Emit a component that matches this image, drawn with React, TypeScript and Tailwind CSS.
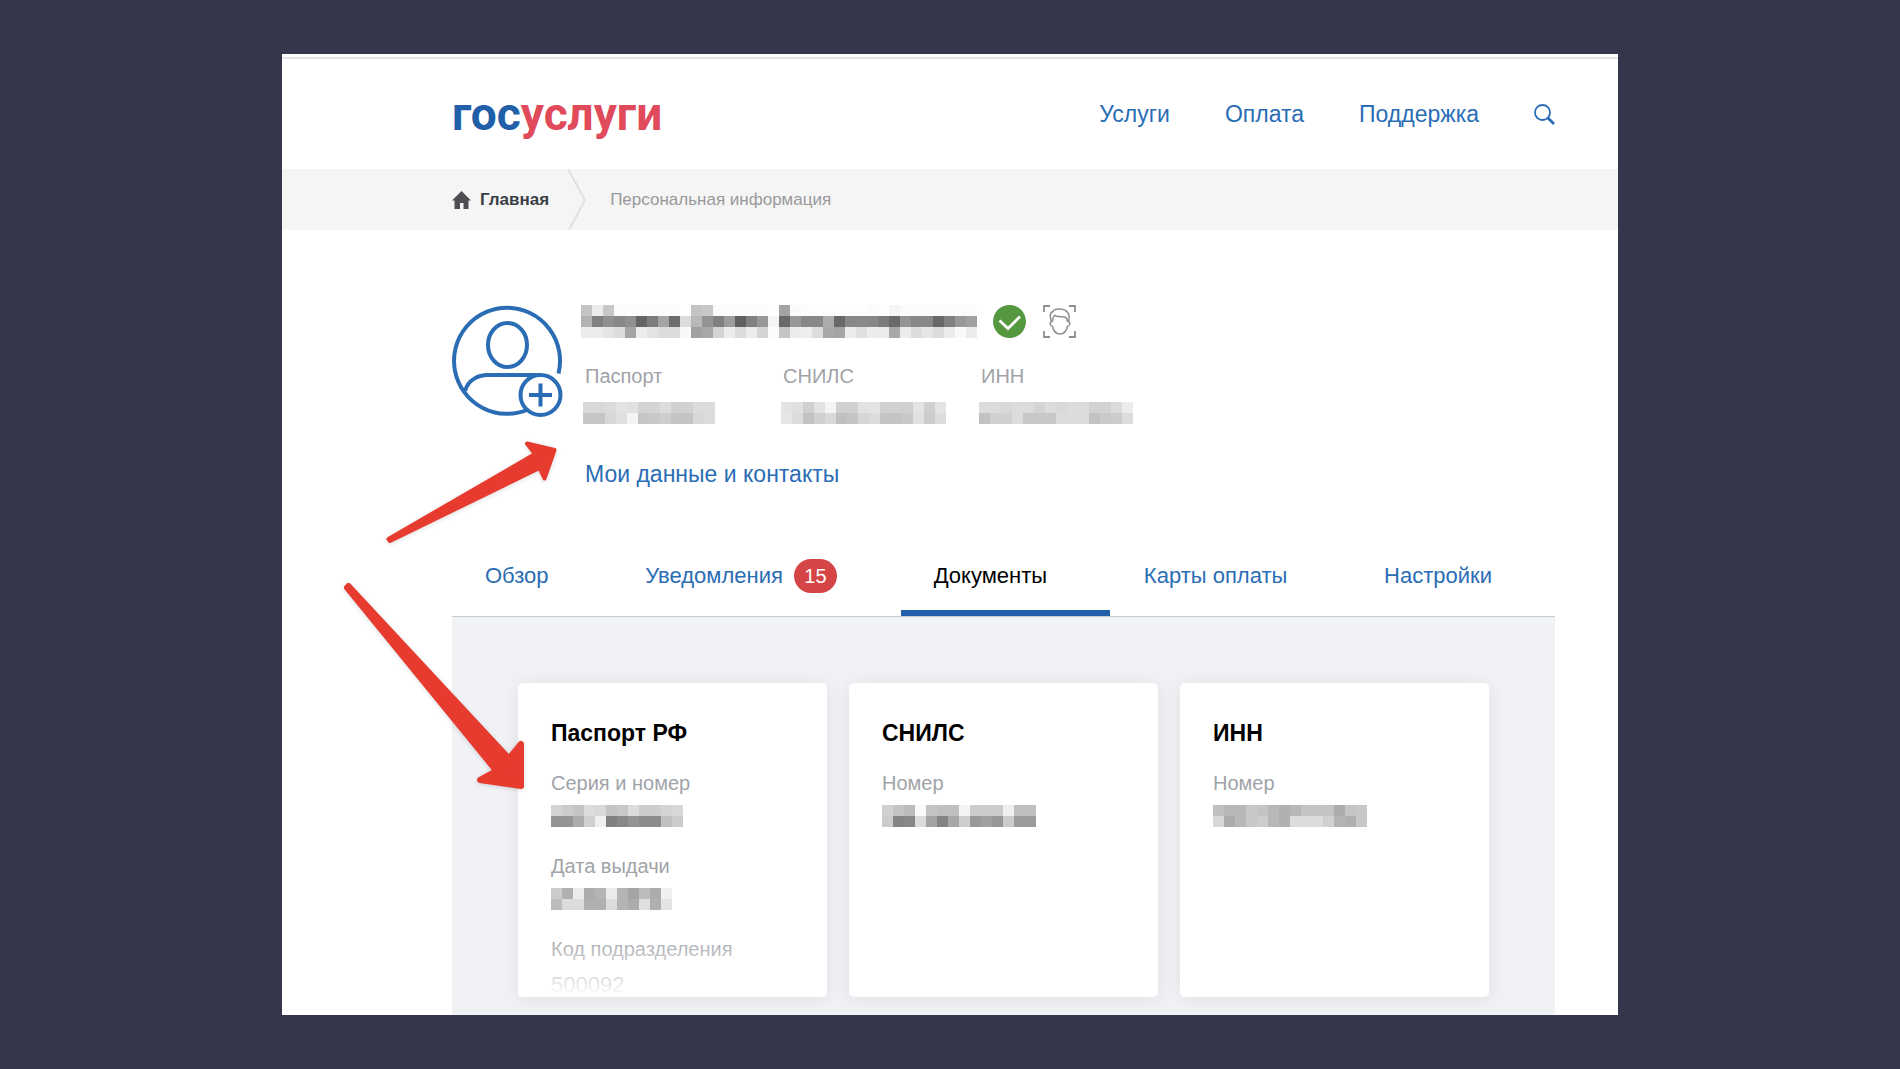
import React from "react";
import clsx from "clsx";

type MosaicProps = {
  label: string;
  rows: string[];
};

type Field = {
  name: string;
  rows?: string[];
  value?: string;
};

type Doc = {
  title: string;
  fields: Field[];
  faded?: boolean;
};

type Tab = {
  name: string;
  badge?: number;
  active?: boolean;
};

const CELL = 11;

const nav = ["Услуги", "Оплата", "Поддержка"];

const tabs: Tab[] = [
  { name: "Обзор" },
  { name: "Уведомления", badge: 15 },
  { name: "Документы", active: true },
  { name: "Карты оплаты" },
  { name: "Настройки" },
];

// each pair of hex digits is the gray level of one cell
const fullName = [
  "c4ecc8fbfbfbfbfbfbffc4c8fbfbfbfbfbfea4fafdfdfdfdfdfdfbfdf5fbfbfbfbfbfbfb",
  "b280908890647ca46cdcb894809c608098f468988888ac688888887c6a948888688098a0",
  "ecece4dca4ece4dcdcf8a0a8d4ecdcecd4fcc4eceedca8a4ece0ececa8ecdce6dcecfaec",
];

const ids: Field[] = [
  { name: "Паспорт", rows: ["d8d8dce4e0d4d4dcd0d2dcdc", "c6c6d8e0f4c6c8cec4c4d8dc"] },
  { name: "СНИЛС", rows: ["e4e0d0e2f4d0d0e2e4d0d2d0e4d0e4", "e6dcc2d0d8c0c4d6dcc4c4c8e0ccdc"] },
  { name: "ИНН", rows: ["dcdcd8dcdcd4dcd8dcdcd2d2dcec", "c2d0d0dcc8c8c8dcdcdcc2caccdc"] },
];

const docs: Doc[] = [
  {
    title: "Паспорт РФ",
    faded: true,
    fields: [
      { name: "Серия и номер", rows: ["d4ccc4dcd8c4c8dcccccd4d8", "9494acd0f08088948c8cc0cc"] },
      { name: "Дата выдачи", rows: ["ccb0ecacb4ecb4a4bcacf0", "bcdcdcb0b0dcb4ace0b0e4"] },
      { name: "Код подразделения", value: "500092" },
    ],
  },
  {
    title: "СНИЛС",
    fields: [{ name: "Номер", rows: ["d0c4bcfac4c0c0f4ccccccf0c0c0", "cc8488dca484a8ce98a098cc9c9c"] }],
  },
  {
    title: "ИНН",
    fields: [{ name: "Номер", rows: ["c0b8b8c8c4b8b0b8c4c4c4acc4c8", "d8acb8c8ccb8b0dcdcdcd0b4b0c8"] }],
  },
];

const Mosaic: React.FC<MosaicProps> = ({ label, rows }) => {
  const width = (rows[0].length / 2) * CELL;
  const height = rows.length * CELL;

  return (
    <svg role="img" aria-label={label} width={width} height={height} shapeRendering="crispEdges" className="block">
      {rows.map((row, y) =>
        (row.match(/../g) ?? []).map((g, x) => (
          <rect key={`${x}-${y}`} x={x * CELL} y={y * CELL} width={CELL} height={CELL} fill={`#${g}${g}${g}`} />
        ))
      )}
    </svg>
  );
};

const Avatar = () => (
  <svg width="111" height="113" viewBox="0 0 111 113" fill="none" stroke="#2a6db5" strokeWidth="4" className="shrink-0">
    <path d="M106.500 68.500A53 53 0 1 0 76 104.500" />
    <ellipse cx="55.500" cy="40" rx="19.500" ry="22" />
    <path d="M13 86C16 75 26 70 36 70H88" />
    <circle cx="88.500" cy="90" r="20" />
    <path d="M88.500 78.500V101.500M77 90H100" />
  </svg>
);

const Verified = () => (
  <svg width="33" height="33" viewBox="0 0 33 33" fill="none">
    <circle cx="16.500" cy="16.500" r="16.500" fill="#56983f" />
    <path d="M6.500 15.500L15 23.500L27 11.500" stroke="#fff" strokeWidth="2.800" />
  </svg>
);

const FaceScan = () => (
  <svg width="33" height="33" viewBox="0 0 33 33" fill="none" stroke="#8f8f8f" strokeWidth="1.500">
    <path d="M1 7V1H7M26 1H32V7M32 26V32H26M7 32H1V26" strokeWidth="1.800" />
    <path d="M8.500 17C7 12 6 8 10 6.500C11 3 22 3 25 8C27 11 26 14 25.500 17" />
    <path d="M9 17C7 16.500 6.500 19 8 20.500L9.500 21.500C10.500 26 13.500 29 17 29C20.500 29 23.500 26 24.500 21.500L26 20.500C27.500 19 27 16.500 25 17" />
    <path d="M9.500 17C9.500 14 9.500 12 11.500 10.500C15 12.500 19 11.500 22 12C24 13 24.500 15 24.500 17" />
  </svg>
);

const Search = () => (
  <svg width="21" height="21" viewBox="0 0 21 21" fill="none" stroke="#2a6db5">
    <circle cx="8.500" cy="8.500" r="7.500" strokeWidth="1.800" />
    <path d="M13.500 13.500L20 20" strokeWidth="2.800" />
  </svg>
);

const Home = () => (
  <svg width="19" height="18" viewBox="0 0 19 18" fill="#4d4f52">
    <path d="M9.500 0L19 9.500H16.500V18H11.500V12H8V18H2.500V9.500H0Z" />
  </svg>
);

const App: React.FC = () => {
  return (
    <div className="min-h-screen bg-[#34364b] px-4 py-[54px] xl:px-[282px] font-['Liberation_Sans',Arial,sans-serif] text-[23px] leading-[28px]">
      <div className="relative overflow-hidden bg-white pt-[3px]">
        <header className="flex items-center justify-between border-t-2 border-[#e2e2ea] h-[112px] pl-[170px] pr-[63px]">
          <a href="#" className="font-['Roboto',sans-serif] font-bold text-[46px] leading-[48px] text-[#2160a8]">
            гос<span className="text-[#e04a5a]">услуги</span>
          </a>
          <nav className="flex items-center gap-[55px] text-[#2a6db5]">
            {nav.map((item) => (
              <a key={item} href="#">
                {item}
              </a>
            ))}
            <button type="button" aria-label="Поиск">
              <Search />
            </button>
          </nav>
        </header>

        <nav className="flex items-center h-[61px] bg-[#f5f5f5] pl-[170px] text-[17px] leading-[24px]">
          <a href="#" className="flex items-center gap-[9px] font-bold text-[#3a3f47]">
            <Home />
            Главная
          </a>
          <svg width="20" height="61" viewBox="0 0 20 61" fill="none" stroke="#e0e0e0" strokeWidth="2" className="ml-[18px] mr-[23px]">
            <path d="M1 0L18 31L2 61" />
          </svg>
          <span className="text-[#999]">Персональная информация</span>
        </nav>

        <main className="pl-[170px] pr-[63px]">
          <section className="flex gap-[18px] pt-[75px]">
            <Avatar />
            <div>
              <div className="flex items-center">
                <Mosaic label="ФИО" rows={fullName} />
                <div className="flex gap-[17px] ml-[16px]">
                  <Verified />
                  <FaceScan />
                </div>
              </div>
              <dl className="flex mt-[24px] pl-[2px]">
                {ids.map((id) => (
                  <div key={id.name} className="w-[198px]">
                    <dt className="pl-[2px] text-[20px] text-[#a0a3a8]">{id.name}</dt>
                    <dd className="mt-[12px]">
                      <Mosaic label={id.name} rows={id.rows ?? []} />
                    </dd>
                  </div>
                ))}
              </dl>
              <a href="#" className="inline-block mt-[36px] pl-[4px] text-[#2a6db5]">
                Мои данные и контакты
              </a>
            </div>
          </section>

          <div role="tablist" className="flex justify-between mt-[68px] border-b border-[#c8cccf] text-[22px]">
            {tabs.map((tab) => (
              <button
                key={tab.name}
                type="button"
                role="tab"
                aria-selected={!!tab.active}
                className={clsx(
                  "flex items-center gap-[11px] h-[60px] pl-[33px] pr-[63px] pb-[14px] border-b-[6px] whitespace-nowrap",
                  tab.active ? "border-[#2160a8] text-black" : "border-transparent text-[#2a6db5]"
                )}
              >
                {tab.name}
                {tab.badge && (
                  <span className="flex items-center justify-center w-[43px] h-[34px] rounded-full bg-[#d64545] text-[20px] text-white">
                    {tab.badge}
                  </span>
                )}
              </button>
            ))}
          </div>

          <section className="grid grid-cols-3 gap-[22px] bg-[#f0f2f6] px-[66px] pt-[66px] pb-[18px]">
            {docs.map((doc) => (
              <article
                key={doc.title}
                className="relative h-[314px] overflow-hidden rounded-[5px] bg-white pl-[33px] pt-[36px] shadow-[0_2px_20px_rgba(0,0,0,0.08)]"
              >
                <h2 className="font-bold text-black">{doc.title}</h2>
                <dl className="mt-[22px]">
                  {doc.fields.map((field) => (
                    <div key={field.name} className="h-[83px]">
                      <dt className="text-[20px] text-[#a0a3a8]">{field.name}</dt>
                      <dd className="mt-[8px] text-[22px] text-[#8c8c8c]">
                        {field.rows ? <Mosaic label={field.name} rows={field.rows} /> : field.value}
                      </dd>
                    </div>
                  ))}
                </dl>
                {doc.faded && (
                  <div className="absolute inset-x-0 bottom-0 h-[64px] bg-linear-to-b from-white/0 to-white" />
                )}
              </article>
            ))}
          </section>
        </main>

        <svg
          width="190"
          height="120"
          viewBox="380 435 190 120"
          fill="#e63b2e"
          stroke="#e63b2e"
          strokeWidth="4"
          strokeLinejoin="round"
          className="absolute left-[98px] top-[381px] drop-shadow-sm"
        >
          <path d="M388.500 539L535 454L527 443.500L554.500 450L544.500 478.500L539.500 468L390 541Z" />
        </svg>
        <svg
          width="190"
          height="220"
          viewBox="340 580 190 220"
          fill="#e63b2e"
          stroke="#e63b2e"
          strokeWidth="6"
          strokeLinejoin="round"
          className="absolute left-[58px] top-[526px] drop-shadow-sm"
        >
          <path d="M348.500 586L509 758.500L521 744V786L480 780L496.500 771L347 587.500Z" />
        </svg>
      </div>
    </div>
  );
};

export default App;
